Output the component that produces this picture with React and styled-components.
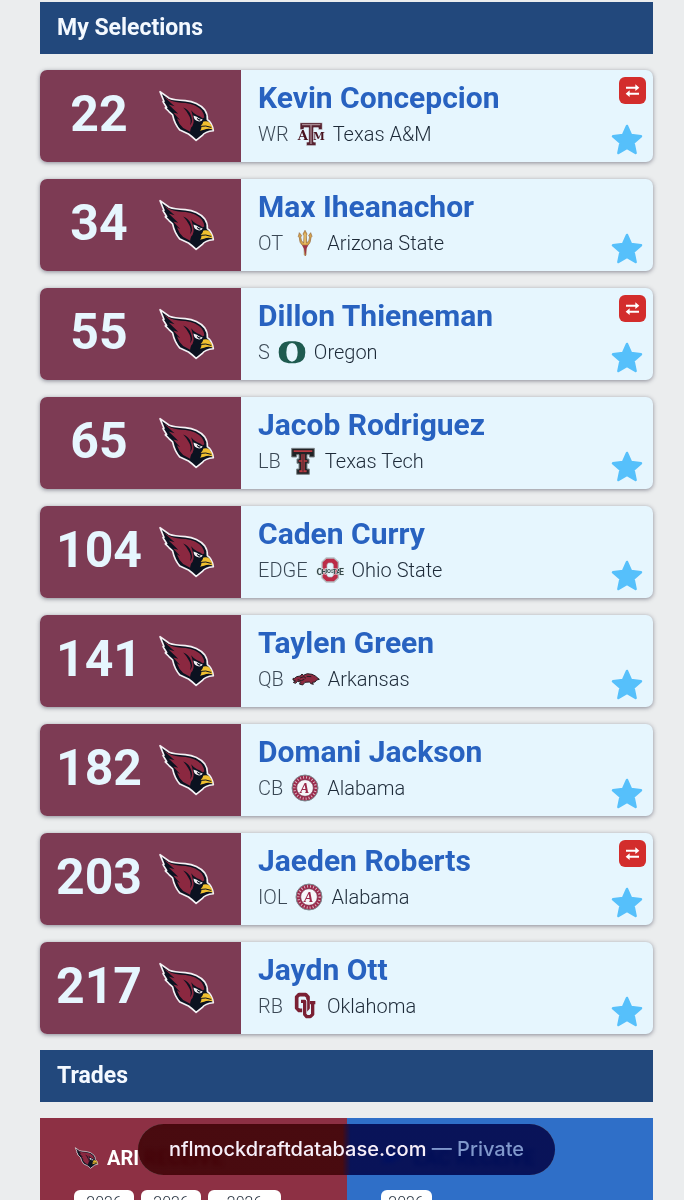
import React from "react";
import styled, { createGlobalStyle, ThemeProvider } from "styled-components";

const theme = {
  fontFamily: `Roboto, "Liberation Sans", sans-serif`,
  colorPage: "#ebedee",
  colorHeader: "#22487c",
  colorCard: "#e6f6fe",
  colorPick: "#7d3b54",
  colorName: "#2862c0",
  colorText: "#1d2a38",
  colorStar: "#56c0fb",
  colorSwap: "#d32d2c",
  colorCardinals: "#8d3044",
  colorChargers: "#2f6fc8",
};

const GlobalStyle = createGlobalStyle`
  *, *::before, *::after {
    box-sizing: border-box;
  }

  body {
    margin: 0;
    background: ${theme.colorPage};
  }
`;

const Page = styled.main`
  display: flex;
  flex-direction: column;
  gap: 16px;
  height: 100vh;
  overflow: hidden;
  padding: 2px 31px 0 40px;
  font-family: ${(props) => props.theme.fontFamily};
  color: ${(props) => props.theme.colorText};
`;

const SectionTitle = styled.h2`
  flex-shrink: 0;
  margin: 0;
  padding: 0 17px;
  font-size: 23px;
  line-height: 52px;
  font-weight: 700;
  color: #f4f9ff;
  background: ${(props) => props.theme.colorHeader};
`;

const PickList = styled.ol`
  display: flex;
  flex-direction: column;
  flex-shrink: 0;
  gap: 17px;
  margin: 0;
  padding: 0;
  list-style: none;
`;

const Card = styled.li`
  display: flex;
  border-radius: 7px;
  overflow: hidden;
  background: ${(props) => props.theme.colorCard};
  box-shadow: 0 1px 4px rgba(40, 40, 60, 0.5);
`;

const Pick = styled.div`
  display: flex;
  align-items: center;
  flex-shrink: 0;
  gap: 16px;
  width: 201px;
  padding-left: 16px;
  background: ${(props) => props.theme.colorPick};
`;

const PickNumber = styled.span`
  width: 86px;
  font-size: 50px;
  line-height: 60px;
  padding-bottom: 4px;
  font-weight: 700;
  text-align: center;
  color: ${(props) => props.theme.colorCard};
`;

const Player = styled.div`
  flex: 1;
  min-width: 0;
  padding: 10px 17px;
`;

const PlayerName = styled.h3`
  margin: 0;
  font-size: 30px;
  line-height: 36px;
  font-weight: 700;
  white-space: nowrap;
  color: ${(props) => props.theme.colorName};
`;

const Meta = styled.div`
  display: flex;
  align-items: center;
  gap: 8px;
  font-size: 20px;
  line-height: 36px;
  font-weight: 300;
  white-space: nowrap;
`;

const Position = styled.span`
  opacity: 0.85;
`;

const Actions = styled.div`
  display: flex;
  flex-direction: column;
  align-items: flex-end;
  justify-content: space-between;
  padding: 7px 7px 5px 0;
`;

const IconButton = styled.button`
  display: flex;
  align-items: center;
  justify-content: center;
  padding: 0;
  border: 0;
  background: none;
  cursor: pointer;
`;

const SwapButton = styled(IconButton)`
  width: 27px;
  height: 27px;
  border-radius: 6px;
  color: #ffffff;
  background: ${(props) => props.theme.colorSwap};
`;

const StarButton = styled(IconButton)`
  margin-top: auto;
  width: 38px;
  height: 34px;
  color: ${(props) => props.theme.colorStar};
`;

const TradePanel = styled.section`
  display: grid;
  grid-template-columns: 1fr 1fr;
  flex-shrink: 0;
`;

const TradeSide = styled.div`
  padding: 27px 16px 28px 34px;
  background: ${(props) => props.$color};
`;

const TradeTeam = styled.h3`
  display: flex;
  align-items: center;
  gap: 8px;
  margin: 0 0 19px;
  font-size: 20px;
  line-height: 26px;
  font-weight: 700;
  white-space: nowrap;
  color: #ffffff;
`;

const Chips = styled.div`
  display: flex;
  gap: 7px;
`;

const Chip = styled.span`
  min-width: ${(props) => (props.$wide ? "73px" : props.$narrow ? "51px" : "60px")};
  height: 56px;
  border-radius: 6px;
  font-size: 16px;
  line-height: 26px;
  font-weight: 300;
  text-align: center;
  background: #ffffff;
`;

const AddressBar = styled.footer`
  position: fixed;
  right: 0;
  bottom: 25px;
  left: 0;
  display: flex;
  justify-content: center;
  padding: 0 31px 0 40px;
`;

const Address = styled.div`
  padding: 0 31px;
  border-radius: 26px;
  font-family: Inter, "Liberation Sans", sans-serif;
  font-size: 20px;
  line-height: 51px;
  font-weight: 500;
  white-space: nowrap;
  color: #f6eef8;
  background: linear-gradient(
    90deg,
    rgba(72, 2, 8, 0.94) 49%,
    rgba(0, 14, 92, 0.94) 51%
  );
  backdrop-filter: invert(1) brightness(0.7) blur(2px);
`;

const Private = styled.span`
  color: #8098cc;
`;

const CardinalLogo = ({ width = 57, height = 52 }) => (
  <svg width={width} height={height} viewBox="40 45 172 157" aria-hidden="true">
    <path
      d="M46 50L74 70Q88 76 122 77Q160 80 181 105Q190 118 189 134Q203 143 207 168Q182 170 173 183L155 197Q142 185 132 178L106 166Q90 148 84 120L73 110L62 99L66 98L55 80L58 79Z"
      fill="#0b1220"
      stroke="#f4f1f4"
      strokeWidth="5"
      strokeLinejoin="round"
    />
    <path
      d="M57 65L78 77Q95 84 123 84Q156 88 172 107Q179 117 180 127L175 131Q168 123 158 121Q149 118 140 106Q145 120 146 128Q151 148 140 158Q137 166 137 171L116 160Q103 148 97 130L107 136L86 113L101 117L72 89L90 94Z"
      fill="#8b2840"
    />
    <path d="M116 98Q133 104 139 121Q147 139 137 152Q142 134 132 120Q126 108 116 98Z" fill="#0b1220" />
    <path d="M147 122Q148 138 164 140Q172 140 175 134Q164 133 157 126Z" fill="#f4f1f4" />
    <path d="M157 129Q162 134 169 134L167 138Q158 137 157 129Z" fill="#0b1220" />
    <path
      d="M177 140Q188 137 195 143Q203 151 205 164Q190 159 179 165L167 168Q174 158 169 153Q174 150 177 140Z"
      fill="#f0c030"
    />
    <path d="M168 155Q184 151 201 158" fill="none" stroke="#0b1220" strokeWidth="3" />
  </svg>
);

const ChargersLogo = () => (
  <svg width="25" height="22" viewBox="0 0 25 22" aria-hidden="true">
    <path d="M1 17Q4 5 16 4Q22 4 24 7L18 9L19 12L12 13L13 16Q6 14 1 17Z" fill="#f5c52b" />
  </svg>
);

const SchoolSvg = ({ title, children }) => (
  <svg width="28" height="28" viewBox="0 0 84 84" role="img" aria-label={title}>
    {children}
  </svg>
);

const slab = {
  fontFamily: "DejaVu Serif, serif",
  fontWeight: 700,
  textAnchor: "middle",
  stroke: "#e6f6fe",
  strokeWidth: 2,
  paintOrder: "stroke",
};

const TexasAM = () => (
  <SchoolSvg title="Texas A&M">
    <path
      d="M9 8H76V29H64V23H50V66H57V77H28V66H35V23H21V29H9Z"
      fill="#572230"
      stroke="#e6f6fe"
      strokeWidth="2"
    />
    <path d="M15 14H70M42 14V72" stroke="#a98b93" strokeWidth="4" fill="none" />
    <g fill="#47121e">
      <text x="18" y="61" fontSize="40" {...slab}>A</text>
      <text x="66" y="61" fontSize="32" {...slab}>M</text>
    </g>
  </SchoolSvg>
);

const ArizonaState = () => (
  <SchoolSvg title="Arizona State">
    <path
      d="M42 4L36 15L39 20L38 42Q30 38 29 24L32 20L25 11L22 23L25 26Q25 42 34 49H39L40 77L43 81L45 77L46 49H51Q59 42 60 26L63 22L59 11L53 20L56 24Q55 38 47 42L46 20L48 15Z"
      fill="#d5a34b"
      stroke="#93653c"
      strokeWidth="2"
    />
    <path d="M33 49H52L46 59L44 80L39 59Z" fill="#9b3448" />
    <path d="M42 14V45" stroke="#f0cf82" strokeWidth="3" />
  </SchoolSvg>
);

const Oregon = () => (
  <SchoolSvg title="Oregon">
    <path
      d="M32 10H52Q82 12 82 43Q82 74 52 76H32Q2 74 2 43Q2 12 32 10ZM42 15Q25 17 25 43Q25 69 42 71Q59 69 59 43Q59 17 42 15Z"
      fill="#1f5b50"
      fillRule="evenodd"
    />
  </SchoolSvg>
);

const TexasTech = () => (
  <SchoolSvg title="Texas Tech">
    <path
      d="M8 4H76V30H61V23H54V36H60V49H54V66H61V82H23V66H30V49H24V36H30V23H23V30H8Z"
      fill="#202326"
      stroke="#7d8589"
      strokeWidth="3"
    />
    <path
      d="M14 10H70V15H14ZM29 40H55V44H29ZM37 22H47V70H53V76H31V70H37Z"
      fill="#b83a42"
    />
    <path d="M42 22V74" stroke="#33282c" strokeWidth="3" fill="none" />
  </SchoolSvg>
);

const OhioState = () => (
  <SchoolSvg title="Ohio State">
    <path d="M31 6H54L67 18V66L54 78H31L18 66V18Z" fill="#bc2b47" stroke="#b5bec2" strokeWidth="4" />
    <path d="M37 21H48L52 26V58L48 63H37L33 58V26Z" fill="#e6f6fe" stroke="#b5bec2" strokeWidth="2" />
    <g
      fontFamily="Roboto, sans-serif"
      fontWeight="700"
      textAnchor="middle"
      stroke="#dfe9ec"
      strokeWidth="3"
      paintOrder="stroke"
      fill="#34484a"
    >
      <text x="11" y="58" fontSize="28">O</text>
      <text x="24" y="54" fontSize="21">H</text>
      <text x="42" y="52" fontSize="17">IOS</text>
      <text x="62" y="54" fontSize="21">TA</text>
      <text x="76" y="58" fontSize="26">E</text>
    </g>
  </SchoolSvg>
);

const Arkansas = () => (
  <SchoolSvg title="Arkansas">
    <path
      d="M3 45Q1 38 8 40L14 35L25 33L30 27L34 31L46 26L60 28L70 33L78 40L82 43L74 45L69 51L61 52L64 58L57 56L52 51L39 52L32 60L22 57L27 52L17 49L10 55L4 52L11 48Z"
      fill="#8c2a40"
      stroke="#251d23"
      strokeWidth="3"
      strokeLinejoin="round"
    />
    <path d="M24 39L36 35L42 40M44 34L58 35M17 44L28 47L37 43" stroke="#251d23" strokeWidth="3" fill="none" />
  </SchoolSvg>
);

const Alabama = () => (
  <SchoolSvg title="Alabama">
    <circle cx="42" cy="42" r="39" fill="#9c294b" stroke="#7c8a90" strokeWidth="3" />
    <circle cx="42" cy="42" r="32" fill="none" stroke="#dcb9c6" strokeWidth="7" strokeDasharray="3 6" />
    <circle cx="42" cy="42" r="25" fill="#f6f7fa" stroke="#74374f" strokeWidth="2" />
    <text
      x="41"
      y="56"
      fontSize="42"
      fontFamily="Liberation Serif, serif"
      fontStyle="italic"
      fontWeight="700"
      textAnchor="middle"
      fill="#9c294b"
    >
      A
    </text>
  </SchoolSvg>
);

const Oklahoma = () => (
  <SchoolSvg title="Oklahoma">
    <g fill="none" strokeLinejoin="round">
      <path d="M24 8H44L51 15V48L44 55H24L17 48V15Z" stroke="#7a2033" strokeWidth="11" />
      <path d="M31 28H41V67L47 74H58L65 67V35M59 32H72" stroke="#e6f6fe" strokeWidth="15" />
      <path d="M30 28H41V67L47 74H58L65 67V33M57 32H73" stroke="#7a2033" strokeWidth="10" />
    </g>
  </SchoolSvg>
);

const SwapIcon = () => (
  <svg width="15" height="15" viewBox="0 0 45 45" fill="none" aria-hidden="true">
    <path d="M3 14H34M11 32H42" stroke="currentColor" strokeWidth="6" />
    <path d="M31 4L43 14L31 24ZM14 22L2 32L14 42Z" fill="currentColor" />
  </svg>
);

const StarIcon = () => (
  <svg width="34" height="34" viewBox="0 0 34 34" aria-hidden="true">
    <path
      d="M17 3L21 12L31 13.200L23.500 19.700L25.600 30L17 25L8.400 30L10.500 19.700L3 13.200L13 12Z"
      fill="currentColor"
      stroke="currentColor"
      strokeWidth="2.500"
      strokeLinejoin="round"
    />
  </svg>
);

const picks = [
  { number: 22, name: "Kevin Concepcion", position: "WR", school: "Texas A&M", Logo: TexasAM, traded: true },
  { number: 34, name: "Max Iheanachor", position: "OT", school: "Arizona State", Logo: ArizonaState },
  { number: 55, name: "Dillon Thieneman", position: "S", school: "Oregon", Logo: Oregon, traded: true },
  { number: 65, name: "Jacob Rodriguez", position: "LB", school: "Texas Tech", Logo: TexasTech },
  { number: 104, name: "Caden Curry", position: "EDGE", school: "Ohio State", Logo: OhioState },
  { number: 141, name: "Taylen Green", position: "QB", school: "Arkansas", Logo: Arkansas },
  { number: 182, name: "Domani Jackson", position: "CB", school: "Alabama", Logo: Alabama },
  { number: 203, name: "Jaeden Roberts", position: "IOL", school: "Alabama", Logo: Alabama, traded: true },
  { number: 217, name: "Jaydn Ott", position: "RB", school: "Oklahoma", Logo: Oklahoma },
];

const PickCard = ({ number, name, position, school, Logo, traded }) => (
  <Card>
    <Pick>
      <PickNumber>{number}</PickNumber>
      <CardinalLogo />
    </Pick>
    <Player>
      <PlayerName>{name}</PlayerName>
      <Meta>
        <Position>{position}</Position>
        <Logo />
        <span>{school}</span>
      </Meta>
    </Player>
    <Actions>
      {traded && (
        <SwapButton type="button" aria-label={`Trade details for pick ${number}`}>
          <SwapIcon />
        </SwapButton>
      )}
      <StarButton type="button" aria-label={`Favorite ${name}`}>
        <StarIcon />
      </StarButton>
    </Actions>
  </Card>
);

const App = () => (
  <ThemeProvider theme={theme}>
    <GlobalStyle />
    <Page>
      <SectionTitle>My Selections</SectionTitle>
      <PickList>
        {picks.map((pick) => (
          <PickCard key={pick.number} {...pick} />
        ))}
      </PickList>
      <SectionTitle>Trades</SectionTitle>
      <TradePanel>
        <TradeSide $color={theme.colorCardinals}>
          <TradeTeam>
            <CardinalLogo width={25} height={22} />
            ARI RECEIVE
          </TradeTeam>
          <Chips>
            <Chip>2026</Chip>
            <Chip>2026</Chip>
            <Chip $wide>2026</Chip>
          </Chips>
        </TradeSide>
        <TradeSide $color={theme.colorChargers}>
          <TradeTeam>
            <ChargersLogo />
            LAC RECEIVE
          </TradeTeam>
          <Chips>
            <Chip $narrow>2026</Chip>
          </Chips>
        </TradeSide>
      </TradePanel>
    </Page>
    <AddressBar>
      <Address>
        nflmockdraftdatabase.com <Private>— Private</Private>
      </Address>
    </AddressBar>
  </ThemeProvider>
);

export default App;
